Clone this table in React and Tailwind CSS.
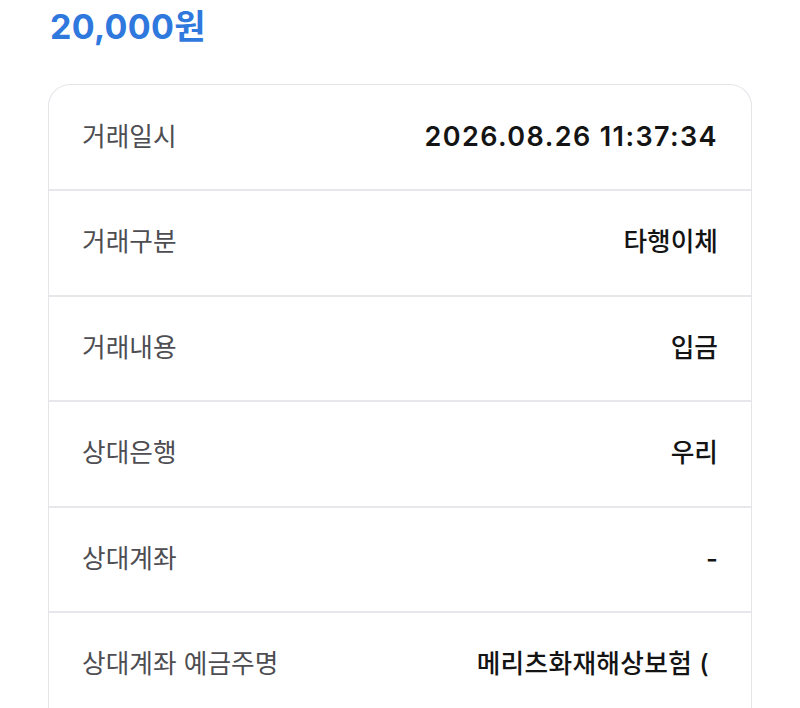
const ROWS = [
  { label: '거래일시', value: '2026.08.26 11:37:34', num: true },
  { label: '거래구분', value: '타행이체' },
  { label: '거래내용', value: '입금' },
  { label: '상대은행', value: '우리' },
  { label: '상대계좌', value: '-' },
  { label: '상대계좌 예금주명', value: '메리츠화재해상보험 (', cut: true },
];

export default function App() {
  return (
    <div
      className="h-[708px] overflow-hidden bg-white px-[48px]"
      style={{ fontFamily: 'Inter, "Noto Sans CJK KR", sans-serif' }}
    >
      <div className="pl-[2px] pt-[5px] text-[34px] font-bold leading-[44px] tracking-[0.3px] text-[#2f78dd]">
        20,000원
      </div>

      <div className="mt-[35px] rounded-t-[22px] border border-b-0 border-[#e4e4e9]">
        {ROWS.map((row, i) => (
          <div
            key={row.label}
            className={`flex items-center justify-between pl-[33px] pr-[33px] ${
              i > 0 ? 'h-[105.5px] border-t-2 border-[#e6e6eb]' : 'h-[104px]'
            }`}
          >
            <span className="text-[25.7px] text-[#4d4d52]">{row.label}</span>
            {row.num ? (
              <span className="text-[27px] font-semibold tracking-[1.4px] text-[#141414]">
                {row.value}
              </span>
            ) : (
              <span
                className={`text-[25.7px] font-medium text-[#141414] ${
                  row.cut ? 'pr-[9px] tracking-[0.3px]' : ''
                }`}
              >
                {row.value}
              </span>
            )}
          </div>
        ))}
      </div>
    </div>
  );
}
